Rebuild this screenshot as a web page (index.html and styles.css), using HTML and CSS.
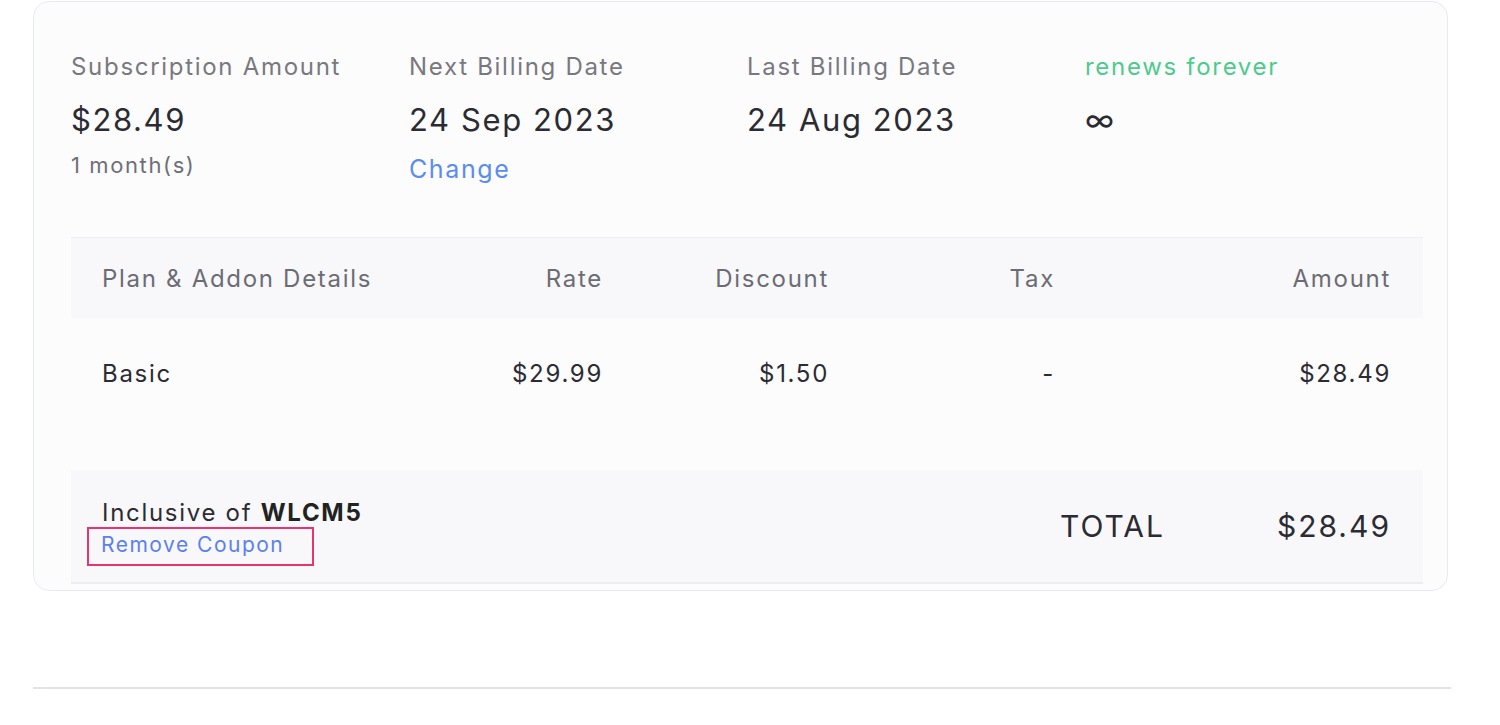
FILE: index.html
```html
<!DOCTYPE html>
<html lang="en">
<head>
    <meta charset="UTF-8">
    <meta name="viewport" content="width=device-width, initial-scale=1.0">
    <title>Subscription</title>
    <link rel="stylesheet" href="styles.css">
</head>
<body>
    <div class="page">
        <div class="card">
            <div class="summary">
                <div class="summary-item">
                    <div class="label">Subscription Amount</div>
                    <div class="value">$28.49</div>
                    <div class="sub">1 month(s)</div>
                </div>
                <div class="summary-item">
                    <div class="label">Next Billing Date</div>
                    <div class="value">24 Sep 2023</div>
                    <a class="link" href="#">Change</a>
                </div>
                <div class="summary-item">
                    <div class="label">Last Billing Date</div>
                    <div class="value">24 Aug 2023</div>
                </div>
                <div class="summary-item">
                    <div class="label renews">renews forever</div>
                    <div class="value">&infin;</div>
                </div>
            </div>

            <div class="items">
                <div class="row head">
                    <div class="cell">Plan &amp; Addon Details</div>
                    <div class="cell num">Rate</div>
                    <div class="cell num">Discount</div>
                    <div class="cell num">Tax</div>
                    <div class="cell num">Amount</div>
                </div>
                <div class="row line">
                    <div class="cell">Basic</div>
                    <div class="cell num">$29.99</div>
                    <div class="cell num">$1.50</div>
                    <div class="cell num">-</div>
                    <div class="cell num">$28.49</div>
                </div>
                <div class="footer">
                    <div class="coupon">
                        <div>Inclusive of <b>WLCM5</b></div>
                        <a class="remove" href="#">Remove Coupon</a>
                    </div>
                    <div class="total">
                        <span>TOTAL</span>
                        <span>$28.49</span>
                    </div>
                </div>
            </div>
        </div>
        <div class="divider"></div>
    </div>
</body>
</html>
```

FILE: styles.css
```css
body {
    margin: 0;
    font-family: Inter, "Noto Sans", sans-serif;
    background-color: #fff;
    color: #2b2b33;
}
.page {
    width: 1418px;
    padding: 1px 0 0 33px;
}
.card {
    width: 1415px;
    box-sizing: border-box;
    border: 1.5px solid #e9e9f3;
    border-radius: 16px;
    background-color: #fcfcfd;
    padding: 50px 24px 6px 37px;
}
.summary {
    display: grid;
    grid-template-columns: repeat(4, 1fr);
    height: 185px;
}
.label {
    font-size: 24px;
    letter-spacing: 1.7px;
    color: #78787f;
    line-height: 30px;
}
.renews {
    color: #4ccb8c;
}
.value {
    font-size: 31px;
    letter-spacing: 1.6px;
    line-height: 40px;
    margin-top: 18px;
    color: #2b2b33;
}
.sub {
    font-size: 22px;
    letter-spacing: 1.6px;
    color: #6f6f78;
    margin-top: 12px;
}
.link {
    display: inline-block;
    font-size: 25px;
    letter-spacing: 1.6px;
    color: #5b8cf0;
    text-decoration: none;
    margin-top: 14px;
}
.items {
    border-top: 1.5px solid #ededf2;
}
.row {
    display: grid;
    grid-template-columns: 338px 226px 226px 226px 1fr;
}
.cell {
    padding: 0 32px 0 31px;
    font-size: 24px;
    letter-spacing: 1.7px;
}
.num {
    text-align: right;
}
.head {
    height: 80px;
    align-items: center;
    background-color: #f8f8fa;
    color: #6c6c75;
}
.line {
    height: 152px;
    padding-top: 41px;
    box-sizing: border-box;
    color: #2b2b33;
}
.footer {
    display: flex;
    justify-content: space-between;
    align-items: center;
    height: 112px;
    padding: 0 32px 0 31px;
    background-color: #f8f8fa;
    border-bottom: 2px solid #ececf2;
}
.coupon {
    font-size: 24px;
    letter-spacing: 1.7px;
    padding-top: 12px;
}
.coupon b {
    color: #222;
}
.remove {
    display: inline-block;
    margin: 0 0 0 -15px;
    padding: 3px 28px 7px 12px;
    border: 2.5px solid #e8336e;
    font-size: 21px;
    letter-spacing: 1.5px;
    color: #5b80f0;
    text-decoration: none;
}
.total {
    display: flex;
    gap: 112px;
    font-size: 30px;
    letter-spacing: 2px;
    color: #2b2b33;
}
.divider {
    margin-top: 96px;
    border-top: 2px solid #e2e2ee;
}
```
